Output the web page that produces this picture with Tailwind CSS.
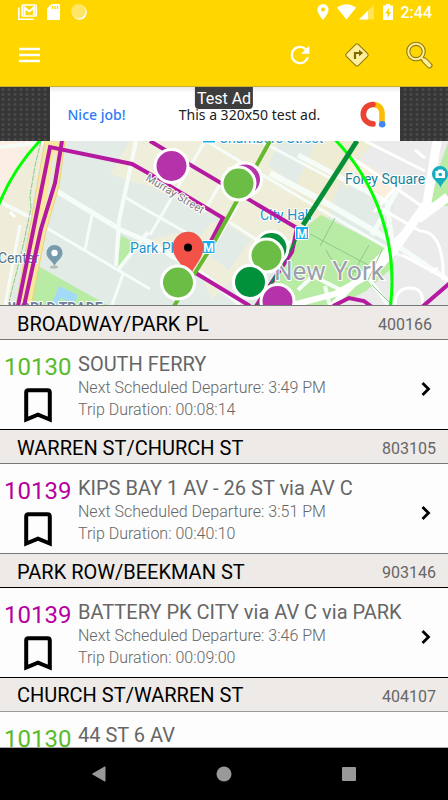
<!DOCTYPE html>
<html lang="en">
<head>
<meta charset="utf-8">
<meta name="viewport" content="width=device-width, initial-scale=1">
<title>Nearby stops</title>
<script src="https://cdn.jsdelivr.net/npm/@tailwindcss/browser@4"></script>
</head>
<body class="flex h-screen flex-col overflow-hidden bg-[#fdfdfd] font-['Roboto',sans-serif]">

<header class="shrink-0 bg-[#ffd600] text-white">
  <div class="flex h-6 items-center justify-between pr-4 pl-[18px]">
    <div class="flex items-center gap-[10px]">
      <svg class="h-4 w-[19px]" viewBox="0 0 19 16" fill="none" stroke="white" aria-hidden="true"><path d="M.8 3.500v11.700h15" stroke-width="1.600"/><rect x="4.200" y="1" width="14" height="11" rx=".8" stroke-width="1.600"/><path d="M6.500 11V3.500l4.700 4 4.700-4V11" stroke-width="2"/></svg>
      <svg class="h-4 w-[13px]" viewBox="0 0 13 16" aria-hidden="true"><path fill="white" d="M4.500 0H12a1 1 0 0 1 1 1v14a1 1 0 0 1-1 1H1a1 1 0 0 1-1-1V4.500z"/><path stroke="#ffd600" stroke-width="1.300" d="M5.500 2v3M8 2v3M10.500 2v3"/></svg>
      <svg class="ml-px h-4 w-4" viewBox="0 0 16 16" aria-hidden="true"><circle cx="8.500" cy="8.500" r="7.300" fill="white"/><circle cx="7.500" cy="7.300" r="7" fill="#ffe565" stroke="#ffeb8a" stroke-dasharray="1 1"/></svg>
    </div>
    <div class="flex items-center">
      <svg class="mr-2 h-4 w-3" viewBox="0 0 12 16" aria-hidden="true"><path fill="white" fill-rule="evenodd" d="M6 0a5.600 5.600 0 0 0-5.600 5.600C.4 9.800 6 16 6 16s5.600-6.200 5.600-10.400A5.600 5.600 0 0 0 6 0zm0 3.600a2 2 0 1 1 0 4 2 2 0 0 1 0-4z"/></svg>
      <svg class="mr-[3px] h-4 w-[19px]" viewBox="0 0 19 16" aria-hidden="true"><path fill="white" d="M0 3.800C5.500-.9 13.500-.9 19 3.800L9.500 15.500z"/></svg>
      <svg class="mr-[9px] h-4 w-[15px]" viewBox="0 0 15 16" aria-hidden="true"><path fill="white" fill-opacity=".35" d="M15 .5V15.500H0z"/><path fill="white" d="M9 6.500v9H0z"/></svg>
      <svg class="mr-2 h-4 w-[10px]" viewBox="0 0 10 16" aria-hidden="true"><path fill="white" d="M3 0h4v1.500h2.200q.8 0 .8.800v12.900q0 .8-.8.800H.8Q0 16 0 15.200V2.300q0-.8.800-.8H3z"/><path fill="#ffd600" d="M6.200 3.500 2 9.500h2.400V14L8 8H5.800z"/></svg>
      <span class="pt-0.5 text-[16px] leading-6 font-medium">2:44</span>
    </div>
  </div>
  <div class="flex h-[62px] items-center justify-between pr-4 pl-[17px]">
    <button type="button" aria-label="Menu" class="grid size-6 place-items-center">
      <svg class="h-4 w-[23px]" viewBox="0 0 23 16" aria-hidden="true"><path stroke="white" stroke-width="2.300" d="M1 2h21M1 8h21M1 14h21"/></svg>
    </button>
    <div class="flex items-center">
      <button type="button" aria-label="Refresh" class="mr-[30px]"><svg class="size-[28px]" viewBox="0 0 24 24" aria-hidden="true"><path fill="white" d="M17.650 6.350A7.960 7.960 0 0 0 12 4a8 8 0 1 0 7.730 10h-2.080A6 6 0 1 1 12 6c1.660 0 3.140.69 4.220 1.780L13 11h7V4z"/></svg></button>
      <button type="button" aria-label="Directions" class="mr-[35px]"><svg class="size-[26px]" viewBox="0 0 26 26" aria-hidden="true"><rect x="4.600" y="4.600" width="16.800" height="16.800" rx="1.800" transform="rotate(45 13 13)" fill="#ffef9c" stroke="#8f7a10" stroke-width="1.100"/><path d="M11 17v-6h5" fill="none" stroke="#806a00" stroke-width="2.200"/><path d="m15 7.700 4.200 3.300-4.200 3.300z" fill="#806a00"/></svg></button>
      <button type="button" aria-label="Search" class="-mr-px"><svg class="size-[28px]" viewBox="0 0 28 28" aria-hidden="true"><g fill="none" stroke-linecap="round"><path d="m16.500 17 2.500 2.500" stroke="#8f7a10" stroke-width="4"/><path d="m19.500 19.500 5 5" stroke="#8f7a10" stroke-width="6"/><circle cx="11" cy="10.500" r="7.700" stroke="#8f7a10" stroke-width="4.200"/><circle cx="11" cy="10.500" r="7.700" stroke="#ffef9c" stroke-width="2"/><path d="m16.800 17 2.500 2.500" stroke="#ffef9c" stroke-width="2"/><path d="m19.700 19.700 4.700 4.700" stroke="#ffef9c" stroke-width="4"/></g></svg></button>
    </div>
  </div>
</header>

<aside aria-label="Advertisement" class="relative flex h-[55px] shrink-0 justify-center border-t border-[#c8b030] bg-[#363636] bg-[radial-gradient(circle_at_center,#4a4a4a_1px,transparent_2px)] bg-size-[6px_5px] pl-px">
  <div class="flex w-[350px] items-center justify-between bg-white bg-linear-to-b from-[#e8e8ea] to-white to-10% pr-3 pl-[18px] font-['Noto_Sans',sans-serif] text-[14px]">
    <span class="font-medium text-[#2f7df6]">Nice job!</span>
    <span class="ml-4 text-[#202124]">This a 320x50 test ad.</span>
    <svg class="h-[28px] w-[30px]" viewBox="0 0 30 28" fill="none" stroke-linecap="round" aria-hidden="true"><path d="M16 4.500c6 0 9 4 9 9V22" stroke="#fbbc04" stroke-width="5.600" stroke-linecap="butt"/><path d="M16 4.500a9.700 9.700 0 0 0 0 19.400" stroke="#ea4335" stroke-width="5.600"/><circle cx="25.200" cy="24.200" r="3.300" fill="#4285f4"/></svg>
  </div>
  <span class="absolute top-0 left-1/2 -translate-x-1/2 rounded-b bg-[#3e3e3e] px-[2px] pt-px text-[16px] leading-[21px] whitespace-nowrap text-white">Test Ad</span>
</aside>

<main class="flex min-h-0 flex-1 flex-col">
  <svg class="h-[164px] w-full shrink-0" viewBox="0 141 448 164" preserveAspectRatio="xMidYMid slice" role="img" aria-label="Map of stops around Park Place, New York" font-family="Roboto, sans-serif">
    <rect y="141" width="448" height="165" fill="#e3ebe6"/>
    <path fill="#efedd9" d="M0 141h45L10 306H0z"/>
    <path fill="#fbeee2" d="M0 141h38L18 172 0 200z"/>
    <path fill="#efeeda" d="M110 174 130 141H280L320 141 290 224 212 300 200 274 150 240 223 220 148 186z"/>
    <path fill="#e3ebe6" d="m280 141 58 0-40 45-30-20zM223 222l28 18-22 30-25-18zM150 190l60 34-15 18-45-24z"/>
    <path fill="#efecd4" d="m316 141 60 0-28 50-46 60-26-18z"/>
    <path fill="#ebebeb" d="M374 141h74v165H340l45-60 10-40-50-30z"/>
    <path fill="#fbeedd" d="m352 156 46 27-12 20-40-26z"/>
    <path fill="#e3ebe6" d="m340 184 43 24-12 27-42-24z"/>
    <path fill="#b8eca5" d="m321 215 70 35 3 16-28 25-28 15h-76l32-70zM38 266l71 40H26zM121 235l18 10-22 23zM440 165l8-22v63h-18z"/>
    <g fill="none" stroke="#f6fcf8" stroke-linejoin="round">
      <path stroke-width="5" d="m55 190 66 40 28 12 56 34 35 28"/>
      <path stroke-width="4" d="m136 141-17 80-3 45M0 202l32 16M0 147l49-5M118 270l30-38"/>
      <path stroke-width="3" d="m123 196 27 16 60 34M45 227l105 62M92 215l-7 35M20 225 5 306M123 274l-12 34M205 141l-55 94M238 205l-34 56"/>
      <path stroke-width="3" d="m206 141 95 57 100 58M223 218l67 43M230 167l-26 45M298 235l-65 55M260 141l72 38"/>
      <path stroke-width="6" d="m270 173 60 32 58 34"/><path stroke-width="5" d="m298 155 89 47 5 40 56 38M372 235l28-50"/>
      <path stroke-width="4" d="m298 290 15-14 30 15M330 306l-5-20M380 265l-12 12 20 28"/>
    </g>
    <g fill="none" stroke="#fff">
      <path stroke-width="9" d="m437 141-10 62-34 48-20 20M448 197l-30 22"/>
      <path stroke-width="6" d="m427 205-20 25-75 76M375 272l-40 22-50 13"/>
      <path stroke-width="3" d="m348 155 78 54M400 182l-26 30M365 141l60 30M380 208l40 23q20 0 23 35v14M402 255l46 25M415 150l10 8M438 268l-8 4M395 306q0-18 15-18t12 18M10 212l5 5"/>
    </g>
    <g fill="none" stroke="#8bc98c" stroke-width="1">
      <path d="m335 218-15 28M310 234l60 32M326 250q5 15 30 22M369 245l-18 32M382 250l-14 30M372 285l18 18"/>
      <path d="m41 141-6 25-5 30 1 12-8 38-15 60" stroke-dasharray="6 1"/>
    </g>
    <path fill="#f8e7a0" d="M46 141h19l-6 45-13 45-15 75H16z"/>
    <path fill="none" stroke="#ecd27a" d="M45 141 16 306M65 141l-6 45-13 45-15 75"/>
    <path fill="none" stroke="#e3ebe6" stroke-width="3" d="m55 154-8 55-8 20"/>
    <path fill="#a3daf7" d="m59 286 19 9-5 11H51z"/><path fill="#b8eca5" d="m61 298 6 3-2 5h-7z"/>

    <g font-size="14" fill="#2093cf" stroke="#fff" stroke-width="2" paint-order="stroke">
      <text x="219" y="143">Chambers Street</text>
      <text x="130" y="253">Park Pl</text>
      <text x="260" y="220">City Hall</text>
      <text x="345" y="184" fill="#19829b">Foley Square</text>
      <text x="-2" y="263" fill="#527183">Center</text>
      <text x="8" y="313" font-weight="700" fill="#70809b">WORLD TRADE</text>
    </g>

    <circle cx="188" cy="281" r="204" fill="none" stroke="#00ff00" stroke-width="3"/>
    <g fill="none" stroke="#b5199f" stroke-width="4">
      <path d="M18 306 50 147l82 17 16 9 75 45-14 27"/>
      <path d="m62 141-7 42-14 46-17 77"/>
      <path d="m150 141 147 87-5 24-36 54M194 272l56 34"/>
      <path d="m333 306 16-8 15 3 8 6M422 307l28-24"/>
    </g>
    <path fill="none" stroke="#66b82e" stroke-width="4" d="m270 141-58 105-38 60"/>
    <path fill="none" stroke="#078f38" stroke-width="5" d="m357 141-54 84"/>
    <path fill="none" stroke="#078f38" stroke-width="2" d="m296 240-38 66"/>

    <text x="145" y="180" transform="rotate(31 145 180)" font-size="11" fill="#7c7c80" stroke="#fff" stroke-width="2" paint-order="stroke">Murray Street</text>
    <text x="274" y="280" font-size="26" fill="#9b9fa9" stroke="#fff" stroke-width="2" paint-order="stroke">New York</text>

    <g stroke="#fff"><rect x="202" y="240.500" width="13" height="13" rx="1" fill="#18aef2"/><rect x="295.500" y="226.500" width="13" height="13" rx="1" fill="#18aef2"/><rect x="202.500" y="130" width="13" height="13" fill="#18aef2"/></g>
    <g font-size="12" font-weight="700" fill="#fff" text-anchor="middle"><text x="208.500" y="251.500">M</text><text x="302" y="237.500">M</text></g>

    <ellipse cx="54" cy="267" rx="4" ry="1.500" fill="#b4bcb8"/>
    <path fill="#789aad" d="M54.500 245a8 8 0 0 0-8 8c0 5.500 5.500 7 8 13 2.500-6 8-7.500 8-13a8 8 0 0 0-8-8z"/><circle cx="54.500" cy="253" r="3.200" fill="#fff"/>
    <path fill="#14aebf" d="M440 166a8 8 0 0 0-8 8c0 6 6 7 8.500 13.500 2.500-6.500 7.500-7.500 7.500-13.500a8 8 0 0 0-8-8z"/><path fill="#fff" d="M435.500 171h2l1-1.500h4l1 1.500h1.500v7h-9.500z"/><circle cx="440.300" cy="174.500" r="1.800" fill="#14aebf"/>

    <path fill="#f25248" stroke="#d9463e" stroke-width=".5" d="M188 232a15 15 0 0 0-15 15c0 13 13 18 16 33 3-14 14-20 14-33a15 15 0 0 0-15-15z"/><circle cx="188" cy="247.500" r="4" fill="#000"/>
    <g stroke="#fff" stroke-width="3">
      <circle cx="171.500" cy="166" r="16.500" fill="#b632ab"/>
      <circle cx="245" cy="179.500" r="16.500" fill="#b632ab"/><circle cx="238.500" cy="183.500" r="16.500" fill="#6cbd45"/>
      <circle cx="271.500" cy="248" r="16.500" fill="#02913b"/><circle cx="266.500" cy="255.500" r="16.500" fill="#6cbd45"/>
      <circle cx="250" cy="282" r="16.500" fill="#02913b"/><circle cx="277.500" cy="301" r="16.500" fill="#b632ab"/>
      <circle cx="178" cy="282.500" r="16.500" fill="#6cbd45"/>
    </g>
  </svg>

  <svg class="hidden" aria-hidden="true">
    <symbol id="bookmark" viewBox="0 0 28 35"><path d="M2.200 31.500V4.500q0-2.300 2.300-2.300h19q2.300 0 2.300 2.300v27L14 26.600z" fill="none" stroke="#000" stroke-width="4"/></symbol>
    <symbol id="chevron" viewBox="0 0 10 16"><path d="m1.500 2 6 6-6 6" fill="none" stroke="#000" stroke-width="2.800"/></symbol>
  </svg>

  <div class="min-h-0 flex-1 overflow-hidden border-b border-[#aaa]">
    <section>
      <div class="flex h-[35px] items-center justify-between border-y border-[#777] bg-[#eeeae7] pr-4 pl-[17px]">
        <h2 class="pt-0.5 text-[20px] leading-6 text-black">BROADWAY/PARK PL</h2><span class="pt-1 text-[16px] leading-6 text-[#666]">400166</span>
      </div>
      <div class="flex h-[89px] pr-[17px] pl-1">
        <div class="flex w-[74px] shrink-0 flex-col pt-3">
          <span class="text-[24px] leading-[30px] text-[#59bb29]">10130</span>
          <button type="button" aria-label="Bookmark 10130" class="mt-[6px] ml-5 w-7"><svg class="h-[35px] w-7"><use href="#bookmark"/></svg></button>
        </div>
        <div class="min-w-0 flex-1 pt-[11px] font-light whitespace-nowrap text-[#666]">
          <h3 class="text-[20px] leading-[26px] font-normal">SOUTH FERRY</h3>
          <p class="text-[16px] leading-[22px]">Next Scheduled Departure: 3:49 PM</p>
          <p class="text-[16px] leading-[22px]">Trip Duration: 00:08:14</p>
        </div>
        <button type="button" aria-label="Open SOUTH FERRY" class="pt-2"><svg class="h-4 w-[10px]"><use href="#chevron"/></svg></button>
      </div>
    </section>
    <section>
      <div class="flex h-[35px] items-center justify-between border-y border-t-black border-b-[#777] bg-[#eeeae7] pr-3 pl-[17px]">
        <h2 class="pt-0.5 text-[20px] leading-6 text-black">WARREN ST/CHURCH ST</h2><span class="pt-1 text-[16px] leading-6 text-[#666]">803105</span>
      </div>
      <div class="flex h-[89px] pr-[17px] pl-1">
        <div class="flex w-[74px] shrink-0 flex-col pt-3">
          <span class="text-[24px] leading-[30px] text-[#b6009f]">10139</span>
          <button type="button" aria-label="Bookmark 10139 Kips Bay" class="mt-[6px] ml-5 w-7"><svg class="h-[35px] w-7"><use href="#bookmark"/></svg></button>
        </div>
        <div class="min-w-0 flex-1 pt-[11px] font-light whitespace-nowrap text-[#666]">
          <h3 class="text-[20px] leading-[26px] font-normal">KIPS BAY 1 AV - 26 ST via AV C</h3>
          <p class="text-[16px] leading-[22px]">Next Scheduled Departure: 3:51 PM</p>
          <p class="text-[16px] leading-[22px]">Trip Duration: 00:40:10</p>
        </div>
        <button type="button" aria-label="Open KIPS BAY" class="pt-2"><svg class="h-4 w-[10px]"><use href="#chevron"/></svg></button>
      </div>
    </section>
    <section>
      <div class="flex h-[35px] items-center justify-between border-y border-t-[#777] border-b-black bg-[#eeeae7] pr-3 pl-[17px]">
        <h2 class="pt-0.5 text-[20px] leading-6 text-black">PARK ROW/BEEKMAN ST</h2><span class="pt-1 text-[16px] leading-6 text-[#666]">903146</span>
      </div>
      <div class="flex h-[89px] pr-[17px] pl-1">
        <div class="flex w-[74px] shrink-0 flex-col pt-3">
          <span class="text-[24px] leading-[30px] text-[#b6009f]">10139</span>
          <button type="button" aria-label="Bookmark 10139 Battery Park City" class="mt-[6px] ml-5 w-7"><svg class="h-[35px] w-7"><use href="#bookmark"/></svg></button>
        </div>
        <div class="min-w-0 flex-1 pt-[11px] font-light whitespace-nowrap text-[#666]">
          <h3 class="text-[20px] leading-[26px] font-normal">BATTERY PK CITY via AV C via PARK</h3>
          <p class="text-[16px] leading-[22px]">Next Scheduled Departure: 3:46 PM</p>
          <p class="text-[16px] leading-[22px]">Trip Duration: 00:09:00</p>
        </div>
        <button type="button" aria-label="Open BATTERY PK CITY" class="pt-2"><svg class="h-4 w-[10px]"><use href="#chevron"/></svg></button>
      </div>
    </section>
    <section>
      <div class="flex h-[35px] items-center justify-between border-y border-t-black border-b-[#999] bg-[#eeeae7] pr-3 pl-[17px]">
        <h2 class="text-[20px] leading-6 text-black">CHURCH ST/WARREN ST</h2><span class="pt-1 text-[16px] leading-6 text-[#666]">404107</span>
      </div>
      <div class="flex pr-4 pl-1">
        <span class="w-[74px] shrink-0 pt-3 text-[24px] leading-[30px] text-[#59bb29]">10130</span>
        <h3 class="pt-[11px] text-[20px] leading-6 text-[#666]">44 ST 6 AV</h3>
      </div>
    </section>
  </div>
</main>

<nav aria-label="System" class="flex h-[52px] shrink-0 items-center justify-center gap-[109px] bg-black">
  <button type="button" aria-label="Back"><svg class="h-4 w-4" viewBox="0 0 15 16" aria-hidden="true"><path fill="#999" d="M13.500.8V15.200L1 8z" stroke="#999" stroke-linejoin="round"/></svg></button>
  <button type="button" aria-label="Home"><svg class="size-4" viewBox="0 0 16 16" aria-hidden="true"><circle cx="8" cy="8" r="7.500" fill="#999"/></svg></button>
  <button type="button" aria-label="Recent apps"><svg class="size-4" viewBox="0 0 16 16" aria-hidden="true"><rect x="1" y="1" width="14" height="14" rx="1" fill="#999"/></svg></button>
</nav>
</body>
</html>
